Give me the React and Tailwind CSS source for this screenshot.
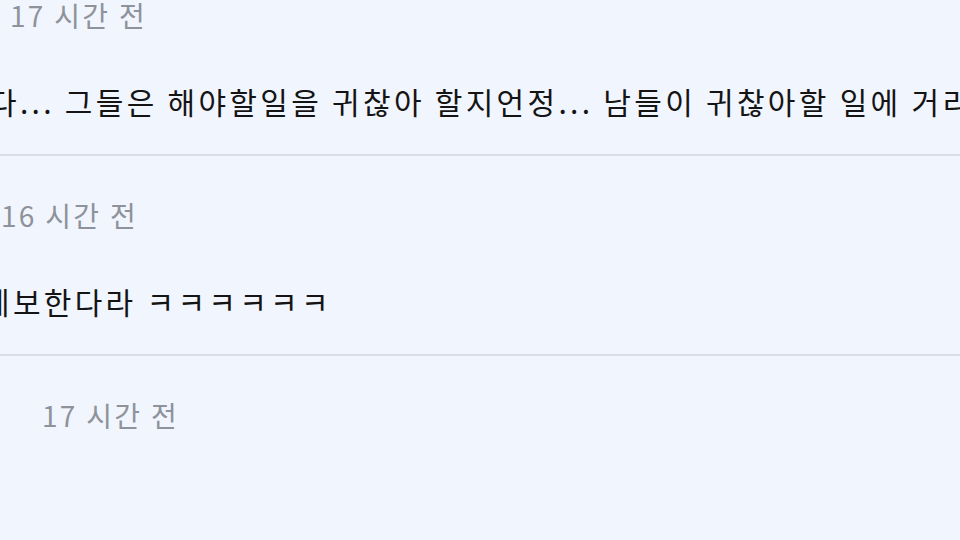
const comments = [
  {
    time: '17 시간 전',
    indent: 'pl-[10px]',
    body: '다... 그들은 해야할일을 귀찮아 할지언정... 남들이 귀찮아할 일에 거리낌이 없다',
    bodyShift: '-ml-[11px]',
  },
  {
    time: '16 시간 전',
    indent: 'pl-[1px]',
    body: '제보한다라 ㅋㅋㅋㅋㅋㅋ',
    bodyShift: '-ml-[18px]',
  },
  {
    time: '17 시간 전',
    indent: 'pl-[42px]',
    body: '',
    bodyShift: '',
  },
];

export default function App() {
  return (
    <div className="w-[960px] h-[540px] overflow-hidden bg-[#f1f5fd] font-['Noto_Sans_CJK_KR','Noto_Sans',sans-serif]">
      <div className="-mt-[44px]">
        {comments.map((c, i) => (
          <div key={i} className="h-[200px] border-b-2 border-[#d9dde6] flex flex-col">
            {/* meta line: timestamp (username scrolled off to the left) */}
            <div className={`pt-[41px] h-[78px] ${c.indent}`}>
              <span className="text-[28px] leading-[36px] tracking-[2.3px] text-[#8e929a] whitespace-nowrap">{c.time}</span>
            </div>
            {/* comment body */}
            <div className="pt-[49px] whitespace-nowrap">
              <p className={`text-[30px] leading-[36px] tracking-[3.3px] text-[#141414] ${c.bodyShift}`}>{c.body}</p>
            </div>
          </div>
        ))}
      </div>
    </div>
  );
}
